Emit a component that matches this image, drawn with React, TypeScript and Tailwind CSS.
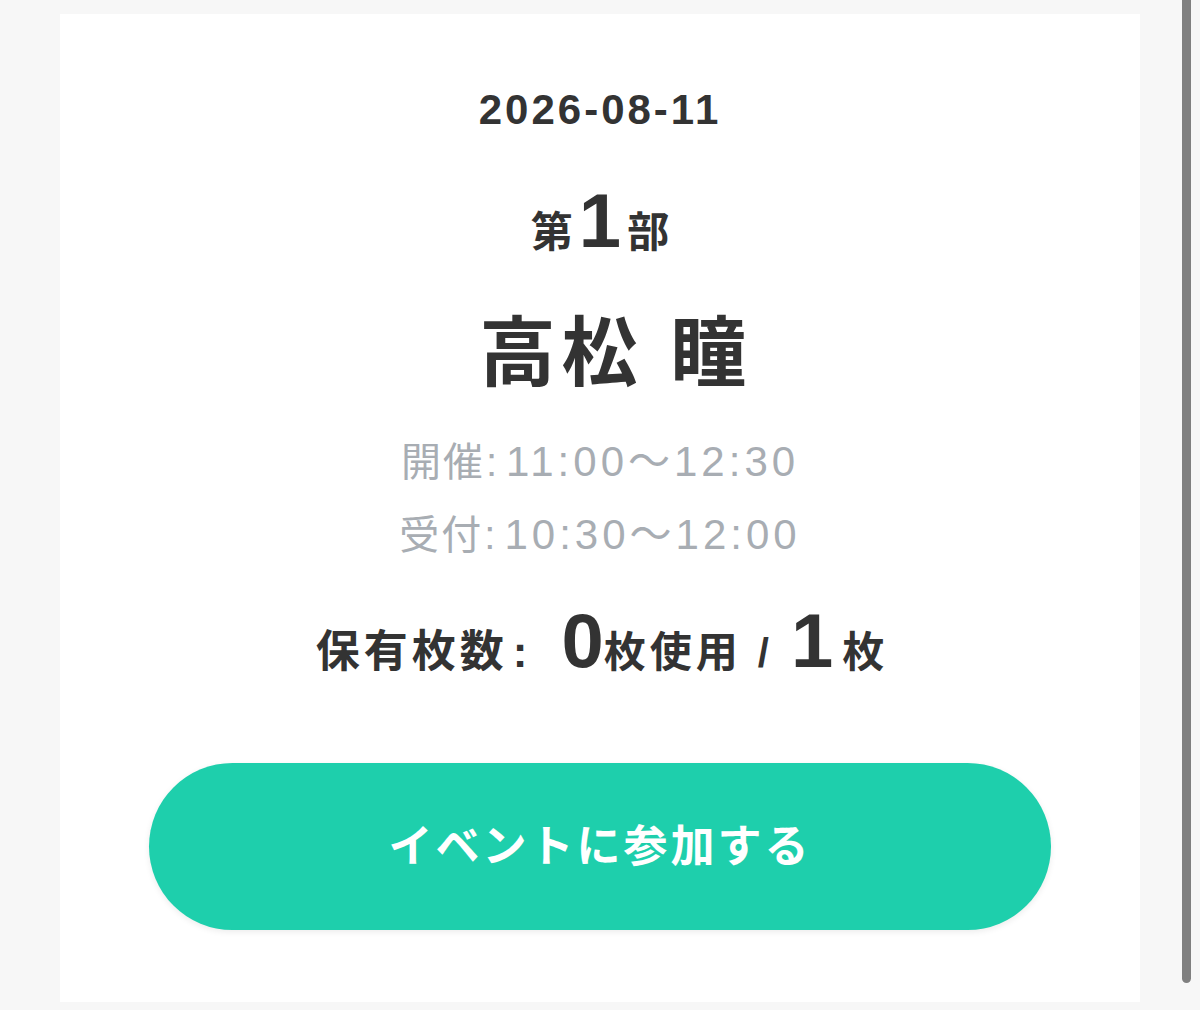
const jp = "font-['Liberation_Sans','Noto_Sans_CJK_JP',sans-serif]";

function TimeRow({ label, time }: { label: string; time: string }) {
  return (
    <div className="flex items-baseline leading-[56px] text-[#a8adb3]">
      <span className="text-[40px] tracking-[2px]">{label}</span>
      <span className="ml-[1px] mr-[9px] text-[40px]">:</span>
      <span className="text-[42px] tracking-[4px]">{time}</span>
    </div>
  );
}

export default function App() {
  return (
    <div className={`flex h-[1010px] w-[1200px] overflow-hidden bg-[#f7f7f7] ${jp}`}>
      <div className="w-[1140px] pl-[60px] pt-[14px]">
        {/* Event card */}
        <div className="flex h-[988px] w-[1080px] flex-col items-center bg-white text-[#333333]">
          <div className="mt-[72px] text-[42px] font-bold leading-[48px] tracking-[3px]">2026-08-11</div>

          <div className="mt-[49px] flex items-baseline leading-none font-bold">
            <span className="text-[42px]">第</span>
            <span className="mx-[6px] text-[76px]">1</span>
            <span className="text-[42px]">部</span>
          </div>

          <div className="mt-[55px] pl-[32px] text-[76px] font-bold leading-[80px] tracking-[6px]">高松 瞳</div>

          <div className="mt-[40px]">
            <TimeRow label="開催" time="11:00～12:30" />
          </div>
          <div className="mt-[17px]">
            <TimeRow label="受付" time="10:30～12:00" />
          </div>

          <div className="mt-[40px] flex items-baseline leading-none font-bold">
            <span className="text-[44px] tracking-[4px]">保有枚数</span>
            <span className="ml-[5px] text-[44px]">:</span>
            <span className="ml-[34px] text-[76px]">0</span>
            <span className="text-[42px] tracking-[4px]">枚使用</span>
            <span className="ml-[16px] mr-[22px] text-[40px]">/</span>
            <span className="text-[76px]">1</span>
            <span className="ml-[9px] text-[42px]">枚</span>
          </div>

          <button className="mt-[84px] flex h-[167px] w-[902px] items-center justify-center rounded-full bg-[#1ecfac] text-[44px] font-bold tracking-[3px] text-white shadow-[0_2px_6px_rgba(0,0,0,0.08)]">
            イベントに参加する
          </button>
        </div>
      </div>

      {/* Scrollbar */}
      <div className="ml-[42px] h-[983px] w-[9px] rounded-b-full bg-[#808080]" />
    </div>
  );
}
